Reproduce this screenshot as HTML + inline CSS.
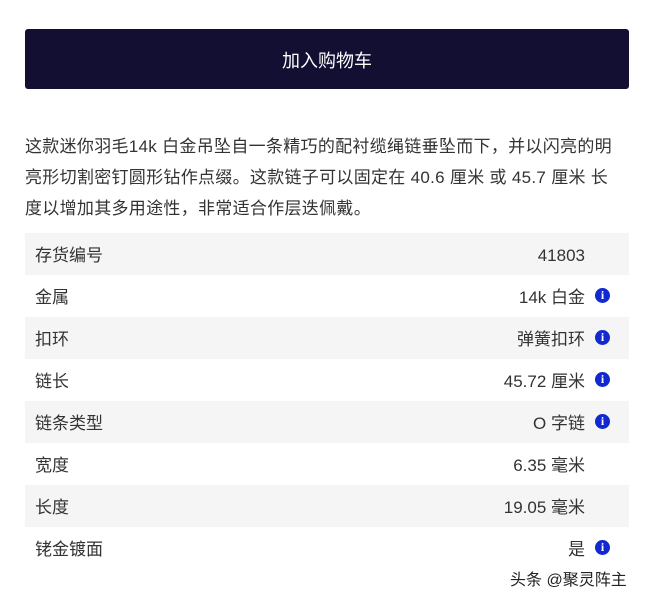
<!DOCTYPE html>
<html><head><meta charset="utf-8"><style>
body{margin:0;width:645px;height:600px;background:#fff;font-family:"Liberation Sans","Noto Sans CJK SC",sans-serif;color:#333;position:relative;overflow:hidden}
.btn{position:absolute;left:25px;top:29px;width:604px;height:60px;background:#130f33;border-radius:3px;color:#fff;font-size:18px;line-height:64px;text-align:center}
.p{position:absolute;left:25px;top:131px;width:620px;font-size:17px;line-height:31px;color:#333;letter-spacing:0.3px;white-space:nowrap}
.row{position:absolute;left:25px;width:604px;height:42px;line-height:45px;font-size:17px}
.row.g{background:#f5f5f5}
.l{position:absolute;left:10px}
.v{position:absolute;right:44px}
.i{position:absolute;left:570px;top:13px;width:15px;height:15px;border-radius:50%;background:#1228d0;color:#fff;font:bold 12px/15px "Liberation Serif",serif;text-align:center}
.wm{position:absolute;left:510px;top:566px;font-size:16px;color:#222}
</style></head><body>
<div class="btn">加入购物车</div>
<div class="p">这款迷你羽毛14k 白金吊坠自一条精巧的配衬缆绳链垂坠而下，并以闪亮的明<br>亮形切割密钉圆形钻作点缀。这款链子可以固定在 40.6 厘米 或 45.7 厘米 长<br>度以增加其多用途性，非常适合作层迭佩戴。</div>
<div class="row g" style="top:233px"><span class="l">存货编号</span><span class="v">41803</span></div>
<div class="row" style="top:275px"><span class="l">金属</span><span class="v">14k 白金</span><span class="i">i</span></div>
<div class="row g" style="top:317px"><span class="l">扣环</span><span class="v">弹簧扣环</span><span class="i">i</span></div>
<div class="row" style="top:359px"><span class="l">链长</span><span class="v">45.72 厘米</span><span class="i">i</span></div>
<div class="row g" style="top:401px"><span class="l">链条类型</span><span class="v">O 字链</span><span class="i">i</span></div>
<div class="row" style="top:443px"><span class="l">宽度</span><span class="v">6.35 毫米</span></div>
<div class="row g" style="top:485px"><span class="l">长度</span><span class="v">19.05 毫米</span></div>
<div class="row" style="top:527px"><span class="l">铑金镀面</span><span class="v">是</span><span class="i">i</span></div>
<div class="wm">头条 @聚灵阵主</div>
</body></html>
